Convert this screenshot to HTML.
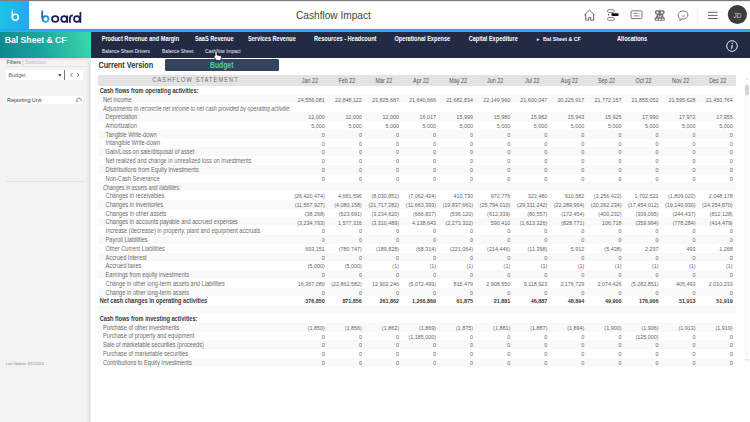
<!DOCTYPE html>
<html><head><meta charset="utf-8">
<style>
*{box-sizing:border-box;margin:0;padding:0}
html,body{width:750px;height:422px;overflow:hidden;background:#fff;font-family:"Liberation Sans",sans-serif;color:#333}
.a{position:absolute;white-space:nowrap}
#topline{position:absolute;left:0;top:0;width:750px;height:2px;background:linear-gradient(#7c7c7c 0,#7c7c7c 50%,#eaeaea 50%,#eaeaea 100%)}
#sq{position:absolute;left:0;top:1px;width:29px;height:29px;background:linear-gradient(100deg,#18c6e6 0%,#2aa6ec 100%)}
#blueline{position:absolute;left:0;top:29px;width:750px;height:3px;background:linear-gradient(#23a3e6,#28b6f2)}
#title{position:absolute;left:296px;top:9.6px;font-size:10.15px;color:#444;white-space:nowrap}
#teal{position:absolute;left:0;top:32px;width:91px;height:26px;background:linear-gradient(75deg,#0f878d 0%,#1aa59f 45%,#3cdaab 100%)}
#teal span{position:absolute;left:4.8px;top:1.7px;font-size:8.65px;font-weight:bold;color:#fff;white-space:nowrap;transform:scaleY(1.12);transform-origin:0 0}
#nav{position:absolute;left:91px;top:32px;width:659px;height:26px;background:#232a44}
.nm{position:absolute;top:2.7px;font-size:5.6px;font-weight:bold;color:#fff;white-space:nowrap;transform:scaleY(1.18);transform-origin:0 0}
.ns{position:absolute;top:15.6px;font-size:4.82px;color:#f4f4f8;white-space:nowrap;transform:scaleY(1.25);transform-origin:0 0}
#left{position:absolute;left:0;top:58px;width:91px;height:364px;background:linear-gradient(90deg,#f3f3f3 0,#f3f3f3 86px,#e4e4e4 89.5px,#ececec 91px)}
.band{position:absolute;left:97.7px;top:75px;width:638px;height:11px;background:#e3e3e3}
.cst{position:absolute;left:152.3px;top:76.4px;font-size:5.6px;letter-spacing:1.12px;color:#707070;white-space:nowrap;transform:scaleY(1.2);transform-origin:0 0}
.mh{position:absolute;top:77.2px;width:30px;text-align:center;font-size:5.4px;color:#555;white-space:nowrap;transform:scaleY(1.2);transform-origin:0 0}
.rb{position:absolute;left:97.6px;width:638px;height:8.774px;background:#f9f9f9}
.lab{position:absolute;font-size:5.65px;line-height:8.774px;height:8.774px;white-space:nowrap;color:#6c6c6c;transform:scaleY(1.18);transform-origin:0 60%}
.lb{font-weight:bold;color:#383838}
.li{font-style:italic;color:#6a6a6a;font-size:5.36px;margin-top:0.4px;transform:scaleY(1.26)!important}
.val{position:absolute;width:40px;text-align:right;font-size:5.4px;line-height:8.774px;color:#666;white-space:nowrap;transform:scaleY(1.08);transform-origin:0 60%}
.vb{font-weight:bold;color:#383838}
</style></head><body>
<div id="topline"></div>
<div id="sq">
<svg width="29" height="29" viewBox="0 1 29 29" style="position:absolute;left:0;top:0">
<defs><linearGradient id="st" gradientUnits="userSpaceOnUse" x1="0" y1="9.3" x2="0" y2="14"><stop offset="0" stop-color="#fff" stop-opacity="0.35"/><stop offset="1" stop-color="#fff" stop-opacity="1"/></linearGradient></defs>
<path d="M12.3 9.3 V17.5" stroke="url(#st)" stroke-width="1.45" fill="none"/>
<circle cx="15.3" cy="17.2" r="3.0" stroke="#fff" stroke-width="1.45" fill="none"/>
</svg>
</div>
<svg width="50" height="20" viewBox="38 6 50 20" style="position:absolute;left:38px;top:6.5px">
<defs><linearGradient id="bg" gradientUnits="userSpaceOnUse" x1="41" y1="11" x2="49" y2="22"><stop offset="0" stop-color="#1a4fa8"/><stop offset="0.6" stop-color="#1f8fd8"/><stop offset="1" stop-color="#33c6f0"/></linearGradient></defs>
<rect x="41.3" y="9" width="1.8" height="1.3" fill="#e8a040"/>
<path d="M42.2 10.3 V18" stroke="url(#bg)" stroke-width="1.8" fill="none"/>
<circle cx="45.6" cy="18" r="2.85" stroke="url(#bg)" stroke-width="1.8" fill="none"/>
<g stroke="#1b2152" stroke-width="1.8" fill="none">
<ellipse cx="55.2" cy="18" rx="3.15" ry="2.85"/>
<circle cx="64.1" cy="18" r="2.85"/>
<path d="M67.2 14.6 V21.8"/>
<path d="M69.9 21.8 V17.4 A3 3 0 0 1 72.9 14.4"/>
<circle cx="76.9" cy="18" r="2.85"/>
<path d="M80.4 10.9 V21.8"/>
</g>
</svg>
<div id="title">Cashflow Impact</div>
<!-- header icons -->
<svg width="180" height="30" viewBox="570 0 180 30" style="position:absolute;left:570px;top:0">
<g stroke="#555" stroke-width="0.9" fill="none" stroke-linejoin="round">
<path d="M584.3 15.2 L589.5 10 L594.7 15.2 M585.7 14 V20.2 H588.6 V17.6 H590.8 V20.2 H593.6 V14"/>
<rect x="607.6" y="9.7" width="6.8" height="2.8" rx="1.2" stroke="#777"/>
<rect x="607.6" y="17.5" width="6.8" height="2.8" rx="1.2" stroke="#777"/>
<rect x="631" y="10.8" width="11" height="7.8" rx="1.2" stroke="#666"/>
<path d="M633.5 13.4 H637.8 M633.5 15.9 H639.6" stroke="#777"/>
<path d="M683 11 C680.1 11 678.1 12.8 678.1 15 C678.1 16.5 678.9 17.7 680.2 18.4 L679.8 20.6 L682 18.9 C682.3 19 682.7 19 683 19 C685.9 19 687.9 17.2 687.9 15 C687.9 12.8 685.9 11 683 11 Z" stroke="#666"/>
<path d="M681.8 16 H684.8" stroke="#777"/>
<path d="M697.3 9 V23" stroke="#e8e8e8"/>
<path d="M708 12.3 H717.6 M708 15.4 H717.6 M708 18.5 H717.6" stroke="#555"/>
<path d="M656.3 10.3 H663.1 Q664.7 10.3 664.7 12.2 Q664.7 14.4 662.8 14.6 L664 17.8 H655.6 L656.9 14.6 Q654.8 14.4 654.8 12.2 Q654.8 10.3 656.3 10.3 Z" fill="#747474" stroke="none"/>
<ellipse cx="657.5" cy="12.4" rx="1.1" ry="1" fill="#fff" stroke="none"/><ellipse cx="662" cy="12.4" rx="1.1" ry="1" fill="#fff" stroke="none"/>
<path d="M658.2 15.2 L659.2 17 M661.3 15.2 L660.3 17" stroke="#fff" stroke-width="0.8"/>
<rect x="654.6" y="17.6" width="10.2" height="3.2" rx="0.8" fill="#747474" stroke="none"/>
</g>
<rect x="655.7" y="18.8" width="2" height="1.1" fill="#fff"/><rect x="658.7" y="18.8" width="2" height="1.1" fill="#fff"/><rect x="661.7" y="18.8" width="2" height="1.1" fill="#fff"/>
<rect x="611.3" y="13.2" width="7.4" height="2.7" rx="1.1" fill="#111"/>
<circle cx="608.6" cy="14.7" r="0.7" fill="#333"/>
<circle cx="639.8" cy="13.4" r="0.5" fill="#777"/>
<circle cx="737.4" cy="14.5" r="9.6" fill="#3d3d3d"/>
<text x="737.4" y="18" font-family="Liberation Sans" font-size="6.4" fill="#d0d0d0" text-anchor="middle">JD</text>
</svg>
<div id="blueline"></div>
<div id="teal"><span>Bal Sheet &amp; CF</span></div>
<div id="nav">
<span class="nm" style="left:10.7px">Product Revenue and Margin</span>
<span class="nm" style="left:104px">SaaS Revenue</span>
<span class="nm" style="left:157px">Services Revenue</span>
<span class="nm" style="left:223px">Resources - Headcount</span>
<span class="nm" style="left:303.5px">Operational Expense</span>
<span class="nm" style="left:377.7px">Capital Expediture</span>
<span class="nm" style="left:446px;font-size:4px;top:3.6px">&#9656;</span>
<span class="nm" style="left:452px;font-size:5.25px">Bal Sheet &amp; CF</span>
<span class="nm" style="left:526px">Allocations</span>
<span class="ns" style="left:11px">Balance Sheet Drivers</span>
<span class="ns" style="left:71px">Balance Sheet</span>
<span class="ns" style="left:114px">Cashflow Impact</span>
<svg width="14" height="14" viewBox="0 0 14 14" style="position:absolute;left:633.5px;top:7.2px">
<circle cx="7" cy="7" r="5.3" stroke="#fff" stroke-width="0.9" fill="none"/>
<circle cx="7.2" cy="4.4" r="0.7" fill="#fff"/>
<path d="M7.2 6 L6.7 9.8" stroke="#fff" stroke-width="1.1"/>
</svg>
</div>
<!-- left panel -->
<div id="left"><div class="a" style="left:0;top:0;width:90px;height:3px;background:linear-gradient(#dedede,#f3f3f3)"></div>
<div class="a" style="left:6.8px;top:1px;font-size:5.2px;color:#444">Filters <span style="color:#aaa">|</span> <span style="color:#bbb">Selection</span></div>
<div class="a" style="left:5px;top:8.2px;width:85px;height:1px;background:#e6e6e6"></div>
<div class="a" style="left:5.5px;top:12px;width:77.5px;height:9.8px;background:#fff"></div>
<div class="a" style="left:8.5px;top:14.2px;font-size:5.4px;color:#666">Budget</div>
<svg width="4" height="3" viewBox="0 0 4 3" style="position:absolute;left:57.8px;top:16.2px"><path d="M0.2 0.3 H3.6 L1.9 2.5 Z" fill="#222"/></svg>
<div class="a" style="left:64.2px;top:12.2px;width:0.7px;height:10px;background:#777"></div>
<svg width="14" height="8" viewBox="0 0 14 8" style="position:absolute;left:69px;top:13px"><path d="M3.3 2 L1.6 4 L3.3 6 M8.2 2 L9.9 4 L8.2 6" stroke="#666" stroke-width="0.8" fill="none"/></svg>
<div class="a" style="left:5.5px;top:38px;width:77.5px;height:8px;background:#fff"></div>
<div class="a" style="left:7px;top:39.2px;font-size:5.4px;color:#333">Reporting Unit</div>
<svg width="8" height="8" viewBox="0 0 8 8" style="position:absolute;left:75px;top:38px">
<path d="M2 5.5 A2.3 2.3 0 1 1 6 5.5" stroke="#666" stroke-width="0.8" fill="none"/>
<path d="M1.3 4.6 L2 5.8 L3 4.8" stroke="#666" stroke-width="0.7" fill="none"/>
</svg>
<div class="a" style="left:6.3px;top:123px;width:78.3px;height:1px;background:#e3e3e3"></div>
<div class="a" style="left:5.9px;top:303.4px;font-size:7.3px;color:#888;transform:scale(0.5);transform-origin:0 0">Last Update: 8/11/2023</div>
</div>
<!-- content -->
<div class="a" style="left:98.4px;top:59.8px;font-size:7.3px;font-weight:bold;color:#333;transform:scaleY(1.15);transform-origin:0 0">Current Version</div>
<div class="a" style="left:165px;top:59px;width:114px;height:12px;background:#33445c;border-radius:1.5px"></div>
<div class="a" style="left:210px;top:61.2px;font-size:6.8px;font-weight:bold;color:#45d3a6;transform:scaleY(1.22);transform-origin:0 0">Budget</div>
<div class="band"></div>
<div class="cst">CASHFLOW STATEMENT</div>
<div class="mh" style="left:294.80px">Jan 22</div>
<div class="mh" style="left:331.88px">Feb 22</div>
<div class="mh" style="left:368.96px">Mar 22</div>
<div class="mh" style="left:406.04px">Apr 22</div>
<div class="mh" style="left:443.12px">May 22</div>
<div class="mh" style="left:480.20px">Jun 22</div>
<div class="mh" style="left:517.28px">Jul 22</div>
<div class="mh" style="left:554.36px">Aug 22</div>
<div class="mh" style="left:591.44px">Sep 22</div>
<div class="mh" style="left:628.52px">Oct 22</div>
<div class="mh" style="left:665.60px">Nov 22</div>
<div class="mh" style="left:702.68px">Dec 22</div>
<div class="lab lb" style="top:86.80px;left:99.7px">Cash flows from operating activities:</div>
<div class="rb" style="top:94.67px"></div>
<div class="lab ln" style="top:95.57px;left:103.0px">Net income</div>
<div class="val " style="top:95.67px;left:284.80px">24,556,081</div>
<div class="val " style="top:95.67px;left:321.88px">22,848,122</div>
<div class="val " style="top:95.67px;left:358.96px">23,825,687</div>
<div class="val " style="top:95.67px;left:396.04px">21,640,666</div>
<div class="val " style="top:95.67px;left:433.12px">21,682,834</div>
<div class="val " style="top:95.67px;left:470.20px">22,149,960</div>
<div class="val " style="top:95.67px;left:507.28px">21,600,047</div>
<div class="val " style="top:95.67px;left:544.36px">20,225,917</div>
<div class="val " style="top:95.67px;left:581.44px">21,772,157</div>
<div class="val " style="top:95.67px;left:618.52px">21,855,052</div>
<div class="val " style="top:95.67px;left:655.60px">21,595,628</div>
<div class="val " style="top:95.67px;left:692.68px">21,450,764</div>
<div class="lab li" style="top:104.35px;left:103.0px">Adjustments to reconcile net income to net cash provided by operating activitie:</div>
<div class="rb" style="top:112.22px"></div>
<div class="lab ln" style="top:113.12px;left:105.6px">Depreciation</div>
<div class="val " style="top:113.22px;left:284.80px">12,000</div>
<div class="val " style="top:113.22px;left:321.88px">12,000</div>
<div class="val " style="top:113.22px;left:358.96px">12,000</div>
<div class="val " style="top:113.22px;left:396.04px">16,017</div>
<div class="val " style="top:113.22px;left:433.12px">15,999</div>
<div class="val " style="top:113.22px;left:470.20px">15,980</div>
<div class="val " style="top:113.22px;left:507.28px">15,962</div>
<div class="val " style="top:113.22px;left:544.36px">15,943</div>
<div class="val " style="top:113.22px;left:581.44px">15,925</div>
<div class="val " style="top:113.22px;left:618.52px">17,990</div>
<div class="val " style="top:113.22px;left:655.60px">17,972</div>
<div class="val " style="top:113.22px;left:692.68px">17,955</div>
<div class="lab ln" style="top:121.90px;left:105.6px">Amortization</div>
<div class="val " style="top:122.00px;left:284.80px">5,000</div>
<div class="val " style="top:122.00px;left:321.88px">5,000</div>
<div class="val " style="top:122.00px;left:358.96px">5,000</div>
<div class="val " style="top:122.00px;left:396.04px">5,000</div>
<div class="val " style="top:122.00px;left:433.12px">5,000</div>
<div class="val " style="top:122.00px;left:470.20px">5,000</div>
<div class="val " style="top:122.00px;left:507.28px">5,000</div>
<div class="val " style="top:122.00px;left:544.36px">5,000</div>
<div class="val " style="top:122.00px;left:581.44px">5,000</div>
<div class="val " style="top:122.00px;left:618.52px">5,000</div>
<div class="val " style="top:122.00px;left:655.60px">5,000</div>
<div class="val " style="top:122.00px;left:692.68px">5,000</div>
<div class="rb" style="top:129.77px"></div>
<div class="lab ln" style="top:130.67px;left:105.6px">Tangible Write-down</div>
<div class="val " style="top:130.77px;left:284.80px">0</div>
<div class="val " style="top:130.77px;left:321.88px">0</div>
<div class="val " style="top:130.77px;left:358.96px">0</div>
<div class="val " style="top:130.77px;left:396.04px">0</div>
<div class="val " style="top:130.77px;left:433.12px">0</div>
<div class="val " style="top:130.77px;left:470.20px">0</div>
<div class="val " style="top:130.77px;left:507.28px">0</div>
<div class="val " style="top:130.77px;left:544.36px">0</div>
<div class="val " style="top:130.77px;left:581.44px">0</div>
<div class="val " style="top:130.77px;left:618.52px">0</div>
<div class="val " style="top:130.77px;left:655.60px">0</div>
<div class="val " style="top:130.77px;left:692.68px">0</div>
<div class="lab ln" style="top:139.44px;left:105.6px">Intangible Write-down</div>
<div class="val " style="top:139.54px;left:284.80px">0</div>
<div class="val " style="top:139.54px;left:321.88px">0</div>
<div class="val " style="top:139.54px;left:358.96px">0</div>
<div class="val " style="top:139.54px;left:396.04px">0</div>
<div class="val " style="top:139.54px;left:433.12px">0</div>
<div class="val " style="top:139.54px;left:470.20px">0</div>
<div class="val " style="top:139.54px;left:507.28px">0</div>
<div class="val " style="top:139.54px;left:544.36px">0</div>
<div class="val " style="top:139.54px;left:581.44px">0</div>
<div class="val " style="top:139.54px;left:618.52px">0</div>
<div class="val " style="top:139.54px;left:655.60px">0</div>
<div class="val " style="top:139.54px;left:692.68px">0</div>
<div class="rb" style="top:147.32px"></div>
<div class="lab ln" style="top:148.22px;left:105.6px">Gain/Loss on sale/disposal of asset</div>
<div class="val " style="top:148.32px;left:284.80px">0</div>
<div class="val " style="top:148.32px;left:321.88px">0</div>
<div class="val " style="top:148.32px;left:358.96px">0</div>
<div class="val " style="top:148.32px;left:396.04px">0</div>
<div class="val " style="top:148.32px;left:433.12px">0</div>
<div class="val " style="top:148.32px;left:470.20px">0</div>
<div class="val " style="top:148.32px;left:507.28px">0</div>
<div class="val " style="top:148.32px;left:544.36px">0</div>
<div class="val " style="top:148.32px;left:581.44px">0</div>
<div class="val " style="top:148.32px;left:618.52px">0</div>
<div class="val " style="top:148.32px;left:655.60px">0</div>
<div class="val " style="top:148.32px;left:692.68px">0</div>
<div class="lab ln" style="top:156.99px;left:105.6px">Net realized and change in unrealized loss on investments</div>
<div class="val " style="top:157.09px;left:284.80px">0</div>
<div class="val " style="top:157.09px;left:321.88px">0</div>
<div class="val " style="top:157.09px;left:358.96px">0</div>
<div class="val " style="top:157.09px;left:396.04px">0</div>
<div class="val " style="top:157.09px;left:433.12px">0</div>
<div class="val " style="top:157.09px;left:470.20px">0</div>
<div class="val " style="top:157.09px;left:507.28px">0</div>
<div class="val " style="top:157.09px;left:544.36px">0</div>
<div class="val " style="top:157.09px;left:581.44px">0</div>
<div class="val " style="top:157.09px;left:618.52px">0</div>
<div class="val " style="top:157.09px;left:655.60px">0</div>
<div class="val " style="top:157.09px;left:692.68px">0</div>
<div class="rb" style="top:164.87px"></div>
<div class="lab ln" style="top:165.77px;left:105.6px">Distributions from Equity Investments</div>
<div class="val " style="top:165.87px;left:284.80px">0</div>
<div class="val " style="top:165.87px;left:321.88px">0</div>
<div class="val " style="top:165.87px;left:358.96px">0</div>
<div class="val " style="top:165.87px;left:396.04px">0</div>
<div class="val " style="top:165.87px;left:433.12px">0</div>
<div class="val " style="top:165.87px;left:470.20px">0</div>
<div class="val " style="top:165.87px;left:507.28px">0</div>
<div class="val " style="top:165.87px;left:544.36px">0</div>
<div class="val " style="top:165.87px;left:581.44px">0</div>
<div class="val " style="top:165.87px;left:618.52px">0</div>
<div class="val " style="top:165.87px;left:655.60px">0</div>
<div class="val " style="top:165.87px;left:692.68px">0</div>
<div class="lab ln" style="top:174.54px;left:105.6px">Non-Cash Severance</div>
<div class="val " style="top:174.64px;left:284.80px">0</div>
<div class="val " style="top:174.64px;left:321.88px">0</div>
<div class="val " style="top:174.64px;left:358.96px">0</div>
<div class="val " style="top:174.64px;left:396.04px">0</div>
<div class="val " style="top:174.64px;left:433.12px">0</div>
<div class="val " style="top:174.64px;left:470.20px">0</div>
<div class="val " style="top:174.64px;left:507.28px">0</div>
<div class="val " style="top:174.64px;left:544.36px">0</div>
<div class="val " style="top:174.64px;left:581.44px">0</div>
<div class="val " style="top:174.64px;left:618.52px">0</div>
<div class="val " style="top:174.64px;left:655.60px">0</div>
<div class="val " style="top:174.64px;left:692.68px">0</div>
<div class="rb" style="top:182.41px"></div>
<div class="lab li" style="top:183.31px;left:103.0px">Changes in assets and liabilities:</div>
<div class="lab ln" style="top:192.09px;left:105.6px">Changes in receivables</div>
<div class="val " style="top:192.19px;left:284.80px">(26,420,474)</div>
<div class="val " style="top:192.19px;left:321.88px">4,681,596</div>
<div class="val " style="top:192.19px;left:358.96px">(8,030,851)</div>
<div class="val " style="top:192.19px;left:396.04px">(7,062,424)</div>
<div class="val " style="top:192.19px;left:433.12px">410,730</div>
<div class="val " style="top:192.19px;left:470.20px">972,776</div>
<div class="val " style="top:192.19px;left:507.28px">323,480</div>
<div class="val " style="top:192.19px;left:544.36px">910,582</div>
<div class="val " style="top:192.19px;left:581.44px">(3,256,422)</div>
<div class="val " style="top:192.19px;left:618.52px">1,702,521</div>
<div class="val " style="top:192.19px;left:655.60px">(1,809,022)</div>
<div class="val " style="top:192.19px;left:692.68px">2,048,178</div>
<div class="rb" style="top:199.96px"></div>
<div class="lab ln" style="top:200.86px;left:105.6px">Changes in inventories</div>
<div class="val " style="top:200.96px;left:284.80px">(11,557,927)</div>
<div class="val " style="top:200.96px;left:321.88px">(4,080,158)</div>
<div class="val " style="top:200.96px;left:358.96px">(21,717,282)</div>
<div class="val " style="top:200.96px;left:396.04px">(11,663,393)</div>
<div class="val " style="top:200.96px;left:433.12px">(19,837,661)</div>
<div class="val " style="top:200.96px;left:470.20px">(25,794,010)</div>
<div class="val " style="top:200.96px;left:507.28px">(29,311,242)</div>
<div class="val " style="top:200.96px;left:544.36px">(22,289,964)</div>
<div class="val " style="top:200.96px;left:581.44px">(20,262,234)</div>
<div class="val " style="top:200.96px;left:618.52px">(17,454,012)</div>
<div class="val " style="top:200.96px;left:655.60px">(19,140,930)</div>
<div class="val " style="top:200.96px;left:692.68px">(24,254,870)</div>
<div class="lab ln" style="top:209.64px;left:105.6px">Changes in other assets</div>
<div class="val " style="top:209.74px;left:284.80px">(38,268)</div>
<div class="val " style="top:209.74px;left:321.88px">(523,691)</div>
<div class="val " style="top:209.74px;left:358.96px">(3,234,620)</div>
<div class="val " style="top:209.74px;left:396.04px">(666,827)</div>
<div class="val " style="top:209.74px;left:433.12px">(536,120)</div>
<div class="val " style="top:209.74px;left:470.20px">(612,339)</div>
<div class="val " style="top:209.74px;left:507.28px">(80,557)</div>
<div class="val " style="top:209.74px;left:544.36px">(172,454)</div>
<div class="val " style="top:209.74px;left:581.44px">(400,232)</div>
<div class="val " style="top:209.74px;left:618.52px">(309,095)</div>
<div class="val " style="top:209.74px;left:655.60px">(244,437)</div>
<div class="val " style="top:209.74px;left:692.68px">(812,128)</div>
<div class="rb" style="top:217.51px"></div>
<div class="lab ln" style="top:218.41px;left:105.6px">Changes in accounts payable and accrued expenses</div>
<div class="val " style="top:218.51px;left:284.80px">(3,234,793)</div>
<div class="val " style="top:218.51px;left:321.88px">1,577,316</div>
<div class="val " style="top:218.51px;left:358.96px">(3,310,489)</div>
<div class="val " style="top:218.51px;left:396.04px">4,138,643</div>
<div class="val " style="top:218.51px;left:433.12px">(2,273,322)</div>
<div class="val " style="top:218.51px;left:470.20px">590,410</div>
<div class="val " style="top:218.51px;left:507.28px">(1,613,326)</div>
<div class="val " style="top:218.51px;left:544.36px">(828,771)</div>
<div class="val " style="top:218.51px;left:581.44px">106,718</div>
<div class="val " style="top:218.51px;left:618.52px">(359,994)</div>
<div class="val " style="top:218.51px;left:655.60px">(778,284)</div>
<div class="val " style="top:218.51px;left:692.68px">(414,479)</div>
<div class="lab ln" style="top:227.18px;left:105.6px">Increase (decrease) in property, plant and equipment accruals</div>
<div class="val " style="top:227.28px;left:284.80px">0</div>
<div class="val " style="top:227.28px;left:321.88px">0</div>
<div class="val " style="top:227.28px;left:358.96px">0</div>
<div class="val " style="top:227.28px;left:396.04px">0</div>
<div class="val " style="top:227.28px;left:433.12px">0</div>
<div class="val " style="top:227.28px;left:470.20px">0</div>
<div class="val " style="top:227.28px;left:507.28px">0</div>
<div class="val " style="top:227.28px;left:544.36px">0</div>
<div class="val " style="top:227.28px;left:581.44px">0</div>
<div class="val " style="top:227.28px;left:618.52px">0</div>
<div class="val " style="top:227.28px;left:655.60px">0</div>
<div class="val " style="top:227.28px;left:692.68px">0</div>
<div class="rb" style="top:235.06px"></div>
<div class="lab ln" style="top:235.96px;left:105.6px">Payroll Liabilities</div>
<div class="val " style="top:236.06px;left:284.80px">0</div>
<div class="val " style="top:236.06px;left:321.88px">0</div>
<div class="val " style="top:236.06px;left:358.96px">0</div>
<div class="val " style="top:236.06px;left:396.04px">0</div>
<div class="val " style="top:236.06px;left:433.12px">0</div>
<div class="val " style="top:236.06px;left:470.20px">0</div>
<div class="val " style="top:236.06px;left:507.28px">0</div>
<div class="val " style="top:236.06px;left:544.36px">0</div>
<div class="val " style="top:236.06px;left:581.44px">0</div>
<div class="val " style="top:236.06px;left:618.52px">0</div>
<div class="val " style="top:236.06px;left:655.60px">0</div>
<div class="val " style="top:236.06px;left:692.68px">0</div>
<div class="lab ln" style="top:244.73px;left:105.6px">Other Current Liabilities</div>
<div class="val " style="top:244.83px;left:284.80px">693,151</div>
<div class="val " style="top:244.83px;left:321.88px">(780,747)</div>
<div class="val " style="top:244.83px;left:358.96px">(189,828)</div>
<div class="val " style="top:244.83px;left:396.04px">(68,314)</div>
<div class="val " style="top:244.83px;left:433.12px">(221,064)</div>
<div class="val " style="top:244.83px;left:470.20px">(214,446)</div>
<div class="val " style="top:244.83px;left:507.28px">(11,398)</div>
<div class="val " style="top:244.83px;left:544.36px">5,912</div>
<div class="val " style="top:244.83px;left:581.44px">(5,438)</div>
<div class="val " style="top:244.83px;left:618.52px">2,297</div>
<div class="val " style="top:244.83px;left:655.60px">493</div>
<div class="val " style="top:244.83px;left:692.68px">1,268</div>
<div class="rb" style="top:252.61px"></div>
<div class="lab ln" style="top:253.51px;left:105.6px">Accrued Interest</div>
<div class="val " style="top:253.61px;left:284.80px">0</div>
<div class="val " style="top:253.61px;left:321.88px">0</div>
<div class="val " style="top:253.61px;left:358.96px">0</div>
<div class="val " style="top:253.61px;left:396.04px">0</div>
<div class="val " style="top:253.61px;left:433.12px">0</div>
<div class="val " style="top:253.61px;left:470.20px">0</div>
<div class="val " style="top:253.61px;left:507.28px">0</div>
<div class="val " style="top:253.61px;left:544.36px">0</div>
<div class="val " style="top:253.61px;left:581.44px">0</div>
<div class="val " style="top:253.61px;left:618.52px">0</div>
<div class="val " style="top:253.61px;left:655.60px">0</div>
<div class="val " style="top:253.61px;left:692.68px">0</div>
<div class="lab ln" style="top:262.28px;left:105.6px">Accrued taxes</div>
<div class="val " style="top:262.38px;left:284.80px">(5,000)</div>
<div class="val " style="top:262.38px;left:321.88px">(5,000)</div>
<div class="val " style="top:262.38px;left:358.96px">(1)</div>
<div class="val " style="top:262.38px;left:396.04px">(1)</div>
<div class="val " style="top:262.38px;left:433.12px">(1)</div>
<div class="val " style="top:262.38px;left:470.20px">(1)</div>
<div class="val " style="top:262.38px;left:507.28px">(1)</div>
<div class="val " style="top:262.38px;left:544.36px">(1)</div>
<div class="val " style="top:262.38px;left:581.44px">(1)</div>
<div class="val " style="top:262.38px;left:618.52px">(1)</div>
<div class="val " style="top:262.38px;left:655.60px">(1)</div>
<div class="val " style="top:262.38px;left:692.68px">(1)</div>
<div class="rb" style="top:270.15px"></div>
<div class="lab ln" style="top:271.05px;left:105.6px">Earnings from equity investments</div>
<div class="val " style="top:271.15px;left:284.80px">0</div>
<div class="val " style="top:271.15px;left:321.88px">0</div>
<div class="val " style="top:271.15px;left:358.96px">0</div>
<div class="val " style="top:271.15px;left:396.04px">0</div>
<div class="val " style="top:271.15px;left:433.12px">0</div>
<div class="val " style="top:271.15px;left:470.20px">0</div>
<div class="val " style="top:271.15px;left:507.28px">0</div>
<div class="val " style="top:271.15px;left:544.36px">0</div>
<div class="val " style="top:271.15px;left:581.44px">0</div>
<div class="val " style="top:271.15px;left:618.52px">0</div>
<div class="val " style="top:271.15px;left:655.60px">0</div>
<div class="val " style="top:271.15px;left:692.68px">0</div>
<div class="lab ln" style="top:279.83px;left:105.6px">Change in other long-term assets and Liabilities</div>
<div class="val " style="top:279.93px;left:284.80px">16,367,080</div>
<div class="val " style="top:279.93px;left:321.88px">(22,862,582)</div>
<div class="val " style="top:279.93px;left:358.96px">12,902,246</div>
<div class="val " style="top:279.93px;left:396.04px">(5,072,499)</div>
<div class="val " style="top:279.93px;left:433.12px">815,479</div>
<div class="val " style="top:279.93px;left:470.20px">2,908,550</div>
<div class="val " style="top:279.93px;left:507.28px">9,118,923</div>
<div class="val " style="top:279.93px;left:544.36px">2,176,729</div>
<div class="val " style="top:279.93px;left:581.44px">2,074,426</div>
<div class="val " style="top:279.93px;left:618.52px">(5,282,851)</div>
<div class="val " style="top:279.93px;left:655.60px">405,493</div>
<div class="val " style="top:279.93px;left:692.68px">2,010,233</div>
<div class="rb" style="top:287.70px"></div>
<div class="lab ln" style="top:288.60px;left:105.6px">Change in other long-term assets</div>
<div class="val " style="top:288.70px;left:284.80px">0</div>
<div class="val " style="top:288.70px;left:321.88px">0</div>
<div class="val " style="top:288.70px;left:358.96px">0</div>
<div class="val " style="top:288.70px;left:396.04px">0</div>
<div class="val " style="top:288.70px;left:433.12px">0</div>
<div class="val " style="top:288.70px;left:470.20px">0</div>
<div class="val " style="top:288.70px;left:507.28px">0</div>
<div class="val " style="top:288.70px;left:544.36px">0</div>
<div class="val " style="top:288.70px;left:581.44px">0</div>
<div class="val " style="top:288.70px;left:618.52px">0</div>
<div class="val " style="top:288.70px;left:655.60px">0</div>
<div class="val " style="top:288.70px;left:692.68px">0</div>
<div class="lab lb" style="top:297.38px;left:99.7px">Net cash changes in operating activities</div>
<div class="val vb" style="top:297.48px;left:284.80px">376,850</div>
<div class="val vb" style="top:297.48px;left:321.88px">871,856</div>
<div class="val vb" style="top:297.48px;left:358.96px">261,862</div>
<div class="val vb" style="top:297.48px;left:396.04px">1,266,869</div>
<div class="val vb" style="top:297.48px;left:433.12px">61,875</div>
<div class="val vb" style="top:297.48px;left:470.20px">21,881</div>
<div class="val vb" style="top:297.48px;left:507.28px">46,887</div>
<div class="val vb" style="top:297.48px;left:544.36px">48,894</div>
<div class="val vb" style="top:297.48px;left:581.44px">49,900</div>
<div class="val vb" style="top:297.48px;left:618.52px">176,906</div>
<div class="val vb" style="top:297.48px;left:655.60px">51,913</div>
<div class="val vb" style="top:297.48px;left:692.68px">51,919</div>
<div class="rb" style="top:305.25px"></div>
<div class="lab lb" style="top:314.92px;left:99.7px">Cash flows from investing activities:</div>
<div class="rb" style="top:322.80px"></div>
<div class="lab ln" style="top:323.70px;left:103.0px">Purchase of other investments</div>
<div class="val " style="top:323.80px;left:284.80px">(1,850)</div>
<div class="val " style="top:323.80px;left:321.88px">(1,856)</div>
<div class="val " style="top:323.80px;left:358.96px">(1,862)</div>
<div class="val " style="top:323.80px;left:396.04px">(1,869)</div>
<div class="val " style="top:323.80px;left:433.12px">(1,875)</div>
<div class="val " style="top:323.80px;left:470.20px">(1,881)</div>
<div class="val " style="top:323.80px;left:507.28px">(1,887)</div>
<div class="val " style="top:323.80px;left:544.36px">(1,894)</div>
<div class="val " style="top:323.80px;left:581.44px">(1,900)</div>
<div class="val " style="top:323.80px;left:618.52px">(1,906)</div>
<div class="val " style="top:323.80px;left:655.60px">(1,913)</div>
<div class="val " style="top:323.80px;left:692.68px">(1,919)</div>
<div class="lab ln" style="top:332.47px;left:103.0px">Purchase of property and equipment</div>
<div class="val " style="top:332.57px;left:284.80px">0</div>
<div class="val " style="top:332.57px;left:321.88px">0</div>
<div class="val " style="top:332.57px;left:358.96px">0</div>
<div class="val " style="top:332.57px;left:396.04px">(1,185,000)</div>
<div class="val " style="top:332.57px;left:433.12px">0</div>
<div class="val " style="top:332.57px;left:470.20px">0</div>
<div class="val " style="top:332.57px;left:507.28px">0</div>
<div class="val " style="top:332.57px;left:544.36px">0</div>
<div class="val " style="top:332.57px;left:581.44px">0</div>
<div class="val " style="top:332.57px;left:618.52px">(125,000)</div>
<div class="val " style="top:332.57px;left:655.60px">0</div>
<div class="val " style="top:332.57px;left:692.68px">0</div>
<div class="rb" style="top:340.35px"></div>
<div class="lab ln" style="top:341.25px;left:103.0px">Sale of marketable securities (proceeds)</div>
<div class="val " style="top:341.35px;left:284.80px">0</div>
<div class="val " style="top:341.35px;left:321.88px">0</div>
<div class="val " style="top:341.35px;left:358.96px">0</div>
<div class="val " style="top:341.35px;left:396.04px">0</div>
<div class="val " style="top:341.35px;left:433.12px">0</div>
<div class="val " style="top:341.35px;left:470.20px">0</div>
<div class="val " style="top:341.35px;left:507.28px">0</div>
<div class="val " style="top:341.35px;left:544.36px">0</div>
<div class="val " style="top:341.35px;left:581.44px">0</div>
<div class="val " style="top:341.35px;left:618.52px">0</div>
<div class="val " style="top:341.35px;left:655.60px">0</div>
<div class="val " style="top:341.35px;left:692.68px">0</div>
<div class="lab ln" style="top:350.02px;left:103.0px">Purchase of marketable securities</div>
<div class="val " style="top:350.12px;left:284.80px">0</div>
<div class="val " style="top:350.12px;left:321.88px">0</div>
<div class="val " style="top:350.12px;left:358.96px">0</div>
<div class="val " style="top:350.12px;left:396.04px">0</div>
<div class="val " style="top:350.12px;left:433.12px">0</div>
<div class="val " style="top:350.12px;left:470.20px">0</div>
<div class="val " style="top:350.12px;left:507.28px">0</div>
<div class="val " style="top:350.12px;left:544.36px">0</div>
<div class="val " style="top:350.12px;left:581.44px">0</div>
<div class="val " style="top:350.12px;left:618.52px">0</div>
<div class="val " style="top:350.12px;left:655.60px">0</div>
<div class="val " style="top:350.12px;left:692.68px">0</div>
<div class="rb" style="top:357.89px"></div>
<div class="lab ln" style="top:358.79px;left:103.0px">Contributions to Equity Investments</div>
<div class="val " style="top:358.89px;left:284.80px">0</div>
<div class="val " style="top:358.89px;left:321.88px">0</div>
<div class="val " style="top:358.89px;left:358.96px">0</div>
<div class="val " style="top:358.89px;left:396.04px">0</div>
<div class="val " style="top:358.89px;left:433.12px">0</div>
<div class="val " style="top:358.89px;left:470.20px">0</div>
<div class="val " style="top:358.89px;left:507.28px">0</div>
<div class="val " style="top:358.89px;left:544.36px">0</div>
<div class="val " style="top:358.89px;left:581.44px">0</div>
<div class="val " style="top:358.89px;left:618.52px">0</div>
<div class="val " style="top:358.89px;left:655.60px">0</div>
<div class="val " style="top:358.89px;left:692.68px">0</div>
<!-- scrollbar -->
<svg width="8" height="300" viewBox="0 0 8 300" style="position:absolute;left:742px;top:70px">
<rect x="2.2" y="11" width="5.2" height="274" fill="#fafafa"/><path d="M3.6 9.8 L5 8.4 L6.4 9.8" stroke="#bbb" stroke-width="0.7" fill="none"/>
<rect x="3" y="14.5" width="4" height="11" rx="2" fill="#d4d4d4"/>
<path d="M3.5 289 L5 290.5 L6.5 289" stroke="#9cc4dc" stroke-width="0.7" fill="none"/>
</svg>
<!-- cursor -->
<svg width="10" height="12" viewBox="0 0 10 12" style="position:absolute;left:213px;top:50px">
<path d="M3 1 C3.6 1 4 1.4 4 2 V5 L7.5 5.8 C8.3 6 8.6 6.6 8.4 7.4 L7.6 10.5 H3.6 L1 7 C0.6 6.4 1.2 5.7 1.9 6.1 L2 6.2 V2 C2 1.4 2.4 1 3 1 Z" fill="#fff" stroke="#111" stroke-width="0.7"/>
</svg>
</body></html>
